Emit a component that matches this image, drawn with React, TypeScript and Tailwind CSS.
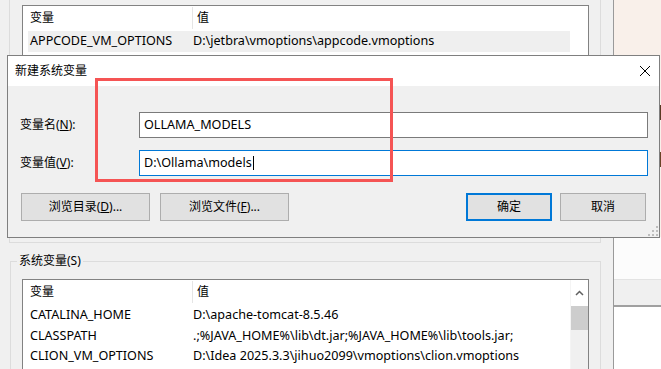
import React from "react";

type Row = { name: string; value: string };

const topRows: Row[] = [{ name: "APPCODE_VM_OPTIONS", value: "D:\\jetbra\\vmoptions\\appcode.vmoptions" }];

const sysRows: Row[] = [
  { name: "CATALINA_HOME", value: "D:\\apache-tomcat-8.5.46" },
  { name: "CLASSPATH", value: ".;%JAVA_HOME%\\lib\\dt.jar;%JAVA_HOME%\\lib\\tools.jar;" },
  { name: "CLION_VM_OPTIONS", value: "D:\\Idea 2025.3.3\\jihuo2099\\vmoptions\\clion.vmoptions" },
];

function VarList({ rows, selected, scroll }: { rows: Row[]; selected?: number; scroll?: boolean }) {
  return (
    <div className="w-[567px] h-[120px] border border-[#828282] bg-white flex">
      <div className="w-[547px] pl-[5px]">
        <div className="h-[24px] flex items-center">
          <div className="w-[164px] pl-[2px]">变量</div>
          <div className="h-[22px] border-l border-[#e5e5e5] pl-[4px] flex items-center">值</div>
        </div>
        <div className="h-[1px]" />
        {rows.map((r, i) => (
          <div
            key={r.name}
            className={`flex items-center text-[12.6px] ${i === 1 ? "h-[20px]" : "h-[21px]"} ${i === selected ? "bg-[#efefef]" : ""}`}
          >
            <div className="w-[165px] pl-[2px] whitespace-nowrap">{r.name}</div>
            <div className="whitespace-nowrap">{r.value}</div>
          </div>
        ))}
      </div>
      {scroll ? (
        <div className="w-[18px] border-l border-[#f4f4f4] flex flex-col">
          <div className="h-[26px] bg-white flex items-center justify-center">
            <svg width="9" height="6" viewBox="0 0 9 6">
              <path d="M1 5 L4.5 1.5 L8 5" fill="none" stroke="#606060" strokeWidth="1.5" />
            </svg>
          </div>
          <div className="h-[24px] bg-[#cdcdcd]" />
          <div className="flex-1 bg-[#f0f0f0]" />
        </div>
      ) : (
        <div className="w-[18px] bg-white" />
      )}
    </div>
  );
}

function Btn({ children, primary, w }: { children: React.ReactNode; primary?: boolean; w: string }) {
  return (
    <div
      className={`${w} h-[28px] flex items-center justify-center bg-[#e1e1e1] ${
        primary ? "border-2 border-[#0078d7]" : "border border-[#adadad]"
      }`}
    >
      {children}
    </div>
  );
}

export default function App() {
  return (
    <div className="relative w-[661px] h-[369px] overflow-hidden bg-[#f0f0f0] flex text-[12px] text-black font-['Noto_Sans','Noto_Sans_CJK_SC',sans-serif] leading-none">
      {/* background window */}
      <div className="w-[614px] border-r border-[#9a9a9a] flex flex-col">
        <div className="ml-[9px] w-[592px] h-[243px] shrink-0 border-l border-r border-b border-[#dcdcdc] pt-[5px] pl-[12px] overflow-hidden">
          <VarList rows={topRows} selected={0} />
        </div>
        <fieldset className="ml-[10px] mt-[10px] w-[591px] flex-1 border border-[#dcdcdc] p-0 min-w-0">
          <legend className="ml-[6px] px-[2px] h-[16px] leading-[16px]">系统变量(S)</legend>
          <div className="pl-[11px] mt-[10px]">
            <VarList rows={sysRows} scroll />
          </div>
        </fieldset>
      </div>

      <div className="flex-1 flex flex-col">
        <div className="h-[55px] bg-[#f9f0ea]" />
        <div className="h-[182px] bg-[#f9f0ea] flex flex-col items-end">
          <div className="h-[50px]" />
          <div className="w-[2px] h-[15px] bg-[#5a3a22]" />
          <div className="h-[32px]" />
          <div className="w-[2px] h-[15px] bg-[#6a4326]" />
        </div>
        <div className="h-[42px] bg-[#fcfcfc]" />
        <div className="h-[28px] border-t border-[#e3e3e3] bg-[#f0f0f0] border-b-2 border-b-[#a0a0a0]" />
        <div className="flex-1 bg-white" />
      </div>

      {/* dialog */}
      <div className="absolute left-[7px] top-[55px] w-[653px] h-[183px] border border-[#7f7f7f] bg-[#f0f0f0] flex flex-col">
        <div className="h-[30px] bg-white flex items-center justify-between pl-[7px] pr-[9px]">
          <span>新建系统变量</span>
          <svg width="10" height="10" viewBox="0 0 10 10">
            <path d="M0 0 L10 10 M10 0 L0 10" stroke="#000" strokeWidth="1" />
          </svg>
        </div>
        <div className="relative flex-1 pt-[26px]">
          <div className="flex items-center h-[26px]">
            <div className="w-[131px] pl-[12px]">
              变量名(<span className="underline">N</span>):
            </div>
            <div className="w-[509px] h-[26px] border border-[#7a7a7a] bg-white pl-[4px] flex items-center text-[12.6px]">
              OLLAMA_MODELS
            </div>
          </div>
          <div className="flex items-center h-[26px] mt-[12px]">
            <div className="w-[131px] pl-[12px]">
              变量值(<span className="underline">V</span>):
            </div>
            <div className="w-[509px] h-[26px] border border-[#0078d7] bg-white pl-[4px] flex items-center text-[12.6px]">
              D:\Ollama\models
              <span className="ml-[1px] w-[1px] h-[14px] bg-black" />
            </div>
          </div>
          <div className="flex mt-[17px] pl-[13px] pr-[13px]">
            <Btn w="w-[129px]">
              浏览目录(<span className="underline">D</span>)...
            </Btn>
            <div className="ml-[10px]">
              <Btn w="w-[129px]">
                浏览文件(<span className="underline">F</span>)...
              </Btn>
            </div>
            <div className="ml-auto">
              <Btn w="w-[86px]" primary>
                确定
              </Btn>
            </div>
            <div className="ml-[8px]">
              <Btn w="w-[86px]">取消</Btn>
            </div>
          </div>
          {/* size grip */}
          <svg className="absolute right-[1px] bottom-[1px]" width="10" height="10" viewBox="0 0 10 10">
            <rect x="8" y="0" width="2" height="2" fill="#bdbdbd" />
            <rect x="4" y="4" width="2" height="2" fill="#bdbdbd" />
            <rect x="8" y="4" width="2" height="2" fill="#bdbdbd" />
            <rect x="0" y="8" width="2" height="2" fill="#bdbdbd" />
            <rect x="4" y="8" width="2" height="2" fill="#bdbdbd" />
            <rect x="8" y="8" width="2" height="2" fill="#bdbdbd" />
          </svg>
        </div>
      </div>

      {/* annotation */}
      <div className="absolute left-[95px] top-[78px] w-[298px] h-[104px] border-[3px] border-[#f55454]" />
    </div>
  );
}
